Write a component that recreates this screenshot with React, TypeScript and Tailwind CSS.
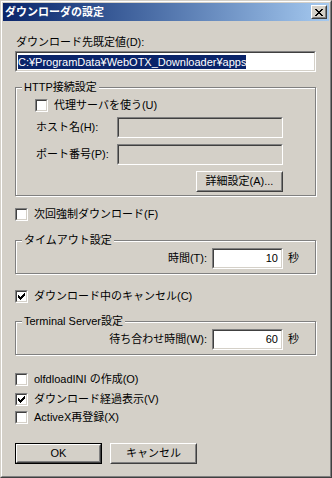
import React from "react";

const FONT = "font-['Liberation_Sans','Noto_Sans_CJK_JP',sans-serif]";

// sunken 3D edge used by text boxes and check boxes
const Sunken: React.FC<{ className?: string; disabled?: boolean; children?: React.ReactNode }> = ({
  className = "",
  disabled,
  children,
}) => (
  <div className={`border border-t-[#808080] border-l-[#808080] border-b-white border-r-white ${className}`}>
    <div
      className={`h-full w-full border border-t-[#404040] border-l-[#404040] border-b-[#d4d0c8] border-r-[#d4d0c8] ${
        disabled ? "bg-[#d4d0c8]" : "bg-white"
      }`}
    >
      {children}
    </div>
  </div>
);

const Raised: React.FC<{ className?: string; children?: React.ReactNode }> = ({ className = "", children }) => (
  <div className={`border border-t-white border-l-white border-b-[#404040] border-r-[#404040] bg-[#d4d0c8] ${className}`}>
    <div className="flex h-full w-full items-center justify-center border border-t-[#d4d0c8] border-l-[#d4d0c8] border-b-[#808080] border-r-[#808080]">
      {children}
    </div>
  </div>
);

const Check: React.FC<{ checked?: boolean }> = ({ checked }) => (
  <Sunken className="h-[13px] w-[13px] shrink-0">
    {checked && (
      <svg width="7" height="7" viewBox="0 0 7 7" className="ml-[1px] mt-[1px]" shapeRendering="crispEdges">
        <rect x="0" y="2" width="1" height="3" fill="#000" />
        <rect x="1" y="3" width="1" height="3" fill="#000" />
        <rect x="2" y="4" width="1" height="3" fill="#000" />
        <rect x="3" y="3" width="1" height="3" fill="#000" />
        <rect x="4" y="2" width="1" height="3" fill="#000" />
        <rect x="5" y="1" width="1" height="3" fill="#000" />
        <rect x="6" y="0" width="1" height="3" fill="#000" />
      </svg>
    )}
  </Sunken>
);

const CheckRow: React.FC<{ label: string; checked?: boolean; className?: string }> = ({ label, checked, className = "" }) => (
  <div className={`flex h-[13px] items-center gap-[6px] ${className}`}>
    <Check checked={checked} />
    <span className="leading-[13px]">{label}</span>
  </div>
);

const Group: React.FC<{ title: string; className?: string; children?: React.ReactNode }> = ({
  title,
  className = "",
  children,
}) => (
  <div className={`relative border border-[#808080] shadow-[inset_1px_1px_0_#fff,1px_1px_0_#fff] ${className}`}>
    <span className="absolute -top-[7px] left-[6px] bg-[#d4d0c8] px-[2px] leading-[13px]">{title}</span>
    {children}
  </div>
);

const SecondsRow: React.FC<{ label: string; value: string }> = ({ label, value }) => (
  <div className="flex items-center justify-end pr-[16px]">
    <span className="leading-[13px]">{label}</span>
    <Sunken className="ml-[5px] h-[21px] w-[71px]">
      <div className="flex h-full items-center justify-end pr-[3px] leading-[13px]">{value}</div>
    </Sunken>
    <span className="ml-[5px] leading-[13px]">秒</span>
  </div>
);

const App: React.FC = () => {
  return (
    <div className={`h-[478px] w-[332px] bg-[#d4d0c8] text-[11px] text-black ${FONT}`}>
      <div className="h-full w-full border border-t-[#d4d0c8] border-l-[#d4d0c8] border-b-[#404040] border-r-[#404040]">
        <div className="flex h-full w-full flex-col border border-t-white border-l-white border-b-[#808080] border-r-[#808080] p-px">
          {/* title bar */}
          <div className="flex h-[18px] shrink-0 items-center justify-between bg-gradient-to-r from-[#0a246a] to-[#a6caf0] pl-[2px] pr-[2px]">
            <span className="font-bold leading-[13px] text-white">ダウンローダの設定</span>
            <Raised className="h-[14px] w-[16px]">
              <svg width="8" height="7" viewBox="0 0 8 7" shapeRendering="crispEdges">
                <path d="M0 0h2v1H0zM6 0h2v1H6zM1 1h2v1H1zM5 1h2v1H5zM2 2h4v1H2zM3 3h2v1H3zM2 4h4v1H2zM1 5h2v1H1zM5 5h2v1H5zM0 6h2v1H0zM6 6h2v1H6z" fill="#000" />
              </svg>
            </Raised>
          </div>

          <div className="flex flex-col pl-[12px] pr-[13px]">
            <div className="mt-[15px] pl-px leading-[13px]">ダウンロード先既定値(D):</div>
            <Sunken className="mt-[2px] h-[21px] w-full">
              <div className="flex h-full items-center pl-px">
                <span className="bg-[#0a246a] leading-[14px] text-white">C:¥ProgramData¥WebOTX_Downloader¥apps</span>
              </div>
            </Sunken>

            <Group title="HTTP接続設定" className="mt-[15px] pl-[19px] pr-[32px] pt-[11px] pb-[3px]">
              <div className="flex flex-col">
                <CheckRow label="代理サーバを使う(U)" />
                <div className="mt-[5px] flex items-center">
                  <span className="w-[82px] pl-px leading-[13px]">ホスト名(H):</span>
                  <Sunken disabled className="h-[21px] flex-1" />
                </div>
                <div className="mt-[6px] flex items-center">
                  <span className="w-[82px] pl-px leading-[13px]">ポート番号(P):</span>
                  <Sunken disabled className="h-[21px] flex-1" />
                </div>
                <Raised className="mt-[6px] h-[21px] w-[87px] self-end">
                  <span className="leading-[13px]">詳細設定(A)...</span>
                </Raised>
              </div>
            </Group>

            <CheckRow label="次回強制ダウンロード(F)" className="mt-[12px]" />

            <Group title="タイムアウト設定" className="mt-[19px] pt-[7px] pb-[4px]">
              <SecondsRow label="時間(T):" value="10" />
            </Group>

            <CheckRow label="ダウンロード中のキャンセル(C)" checked className="mt-[16px]" />

            <Group title="Terminal Server設定" className="mt-[18px] pt-[7px] pb-[4px]">
              <SecondsRow label="待ち合わせ時間(W):" value="60" />
            </Group>

            <CheckRow label="olfdloadINI の作成(O)" className="mt-[18px]" />
            <CheckRow label="ダウンロード経過表示(V)" checked className="mt-[7px]" />
            <CheckRow label="ActiveX再登録(X)" className="mt-[5px]" />

            <div className="mt-[19px] flex gap-[8px]">
              <div className="h-[21px] w-[87px] border border-black">
                <Raised className="h-full w-full">
                  <span className="leading-[13px]">OK</span>
                </Raised>
              </div>
              <Raised className="h-[21px] w-[87px]">
                <span className="leading-[13px]">キャンセル</span>
              </Raised>
            </div>
          </div>
        </div>
      </div>
    </div>
  );
};

export default App;
